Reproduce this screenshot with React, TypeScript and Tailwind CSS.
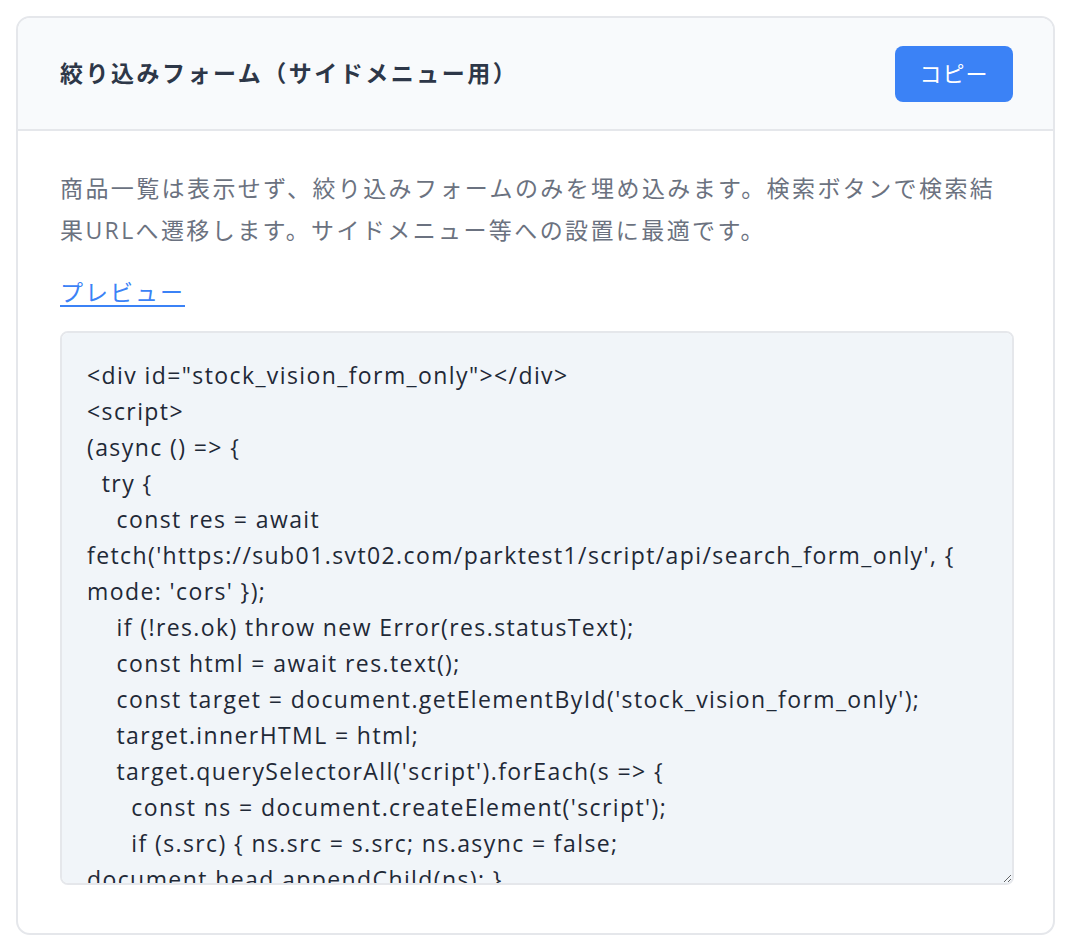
const code = `<div id="stock_vision_form_only"></div>
<script>
(async () => {
  try {
    const res = await fetch('https://sub01.svt02.com/parktest1/script/api/search_form_only', { mode: 'cors' });
    if (!res.ok) throw new Error(res.statusText);
    const html = await res.text();
    const target = document.getElementById('stock_vision_form_only');
    target.innerHTML = html;
    target.querySelectorAll('script').forEach(s => {
      const ns = document.createElement('script');
      if (s.src) { ns.src = s.src; ns.async = false; document.head.appendChild(ns); }
      else { ns.textContent = s.textContent; document.head.appendChild(ns); }
    });
  } catch (e) {
    console.error(e);
  }
})();
</script>`;

export default function App() {
  return (
    <div
      className="bg-white p-4"
      style={{ fontFamily: '"Open Sans", "Noto Sans CJK JP", sans-serif' }}
    >
      <div className="w-[1039px] h-[919px] rounded-[14px] border-2 border-gray-200 overflow-hidden bg-white">
        <div className="h-[113px] flex items-center justify-between pl-[42px] pr-[40px] bg-[#f8fafc] border-b-2 border-gray-200">
          <h2 className="text-[23px] tracking-[2.5px] font-bold text-[#2d3748]">
            絞り込みフォーム（サイドメニュー用）
          </h2>
          <button className="w-[118px] h-[56px] rounded-lg bg-[#3b82f6] text-white text-[22px] tracking-[1px]">
            コピー
          </button>
        </div>
        <div className="px-[42px] pt-[36px]">
          <p className="text-[23px] tracking-[2.4px] leading-[42px] text-[#6b7280]">
            商品一覧は表示せず、絞り込みフォームのみを埋め込みます。検索ボタンで検索結果URLへ遷移します。サイドメニュー等への設置に最適です。
          </p>
          <a href="#" className="inline-block mt-[20px] text-[23px] tracking-[2px] leading-[42px] text-[#3b82f6] underline underline-offset-4">
            プレビュー
          </a>
          <textarea
            readOnly
            defaultValue={code}
            className="mt-[18px] block w-[954px] h-[554px] rounded-lg border-2 border-gray-200 bg-[#f1f5f9] pl-[25px] pr-[20px] pt-[24px] text-[23px] tracking-[1.4px] leading-[36px] text-[#1f2937] outline-none"
            style={{ fontFamily: '"Open Sans", sans-serif' }}
          />
        </div>
      </div>
    </div>
  );
}
